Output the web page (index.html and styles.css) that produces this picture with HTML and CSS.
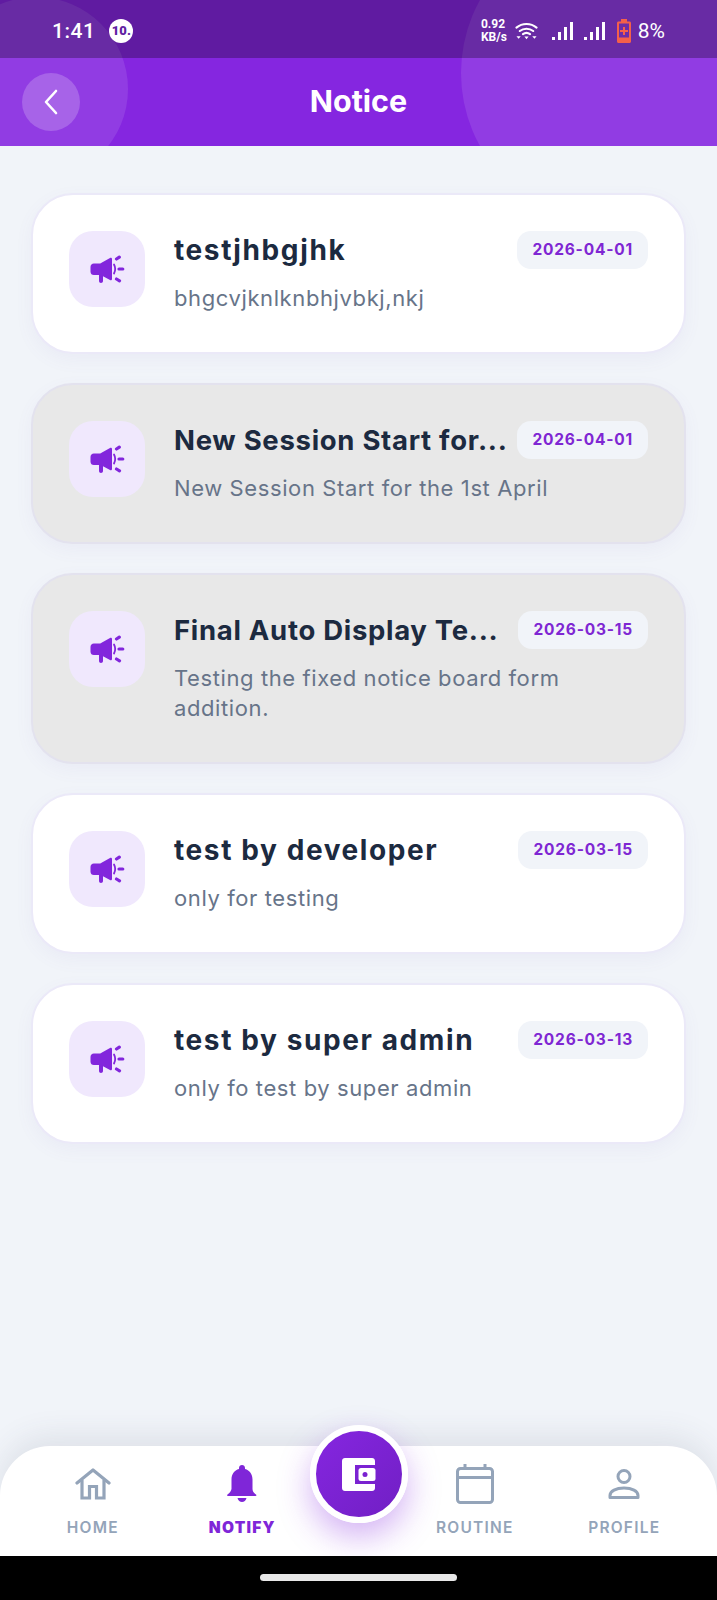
FILE: index.html

```html
<!DOCTYPE html>
<html lang="en">
<head>
  <meta charset="UTF-8">
  <title>Notice</title>
  <link rel="stylesheet" href="styles.css">
</head>
<body>
  <svg class="defs" width="0" height="0">
    <symbol id="megaphone" viewBox="0 0 36 28">
      <path d="M1.500 12c0-2.200 1.400-3.600 3.400-3.600h6.300L21 3c1-.5 2 .1 2 1.100v19.800c0 1-1 1.600-2 1.100l-7-3.800v4.800c0 1.200-.9 2-2 2s-2-.8-2-2v-6H4.900c-2 0-3.400-1.400-3.400-3.600z" fill="currentColor"/>
      <path d="M25 9.500c1.500 2.800 1.500 6.200 0 9" fill="none" stroke="currentColor" stroke-width="1.800" stroke-linecap="round"/>
      <path d="M27.500 4l2.800-1.800M30 14h3.800M27.500 24l3 1.800" fill="none" stroke="currentColor" stroke-width="3.200" stroke-linecap="round"/>
    </symbol>
  </svg>

  <header class="topbar">
    <span class="blob blob-left"></span>
    <span class="blob blob-right"></span>
    <div class="statusbar">
      <div class="status-left">
        <span class="clock">1:41</span>
        <span class="ten">10.</span>
      </div>
      <div class="status-right">
        <span class="speed">0.92<br>KB/s</span>
        <svg class="wifi" viewBox="0 0 24 20" width="23" height="20">
          <path d="M1.500 6.500C7.500 1.500 16.500 1.500 22.500 6.500M5 10c4-3.200 10-3.200 14 0M8.300 13.300c2.200-1.600 5.200-1.600 7.400 0" fill="none" stroke="#fff" stroke-width="2.200" stroke-linecap="round"/>
          <path d="M1.500 15.500h4.500l-2.200 2.500zM9.800 15.800h4.400L12 18.500zM18 15.500h4.500l-2.200 2.500z" fill="#fff"/>
        </svg>
        <svg class="bars" viewBox="0 0 21 20" width="21" height="20"><path d="M0 16h3v3H0zM6 11h3v8H6zM12 6h3v13h-3zM18 1h3v18h-3z" fill="#fff"/></svg>
        <svg class="bars" viewBox="0 0 21 20" width="21" height="20"><path d="M0 16h3v3H0zM6 11h3v8H6zM12 6h3v13h-3zM18 1h3v18h-3z" fill="#fff"/></svg>
        <svg class="battery" viewBox="0 0 14 24" width="14" height="24">
          <path d="M4 0h6v2.500h2.500c.8 0 1.500.7 1.500 1.500v18.500c0 .8-.7 1.500-1.500 1.500h-11C.7 24 0 23.300 0 22.500V4c0-.8.7-1.500 1.500-1.500H4z" fill="#f4604a"/>
          <path d="M2 4.500h10v14H2z" fill="#6a2da8"/>
          <path d="M6 8h2v3h3v2H8v3H6v-3H3v-2h3z" fill="#f4604a"/>
        </svg>
        <span class="percent">8%</span>
      </div>
    </div>
    <div class="titlebar">
      <button class="back">
        <svg viewBox="0 0 16 28" width="16" height="28"><path d="M13 3L3 14l10 11" fill="none" stroke="#fff" stroke-width="2.600" stroke-linecap="round" stroke-linejoin="round"/></svg>
      </button>
      <h1>Notice</h1>
    </div>
  </header>

  <main class="lista">
    <article class="card">
      <div class="card-icon"><svg width="36" height="28"><use href="#megaphone"/></svg></div>
      <div class="card-body">
        <div class="card-top">
          <h2>testjhbgjhk</h2>
          <span class="date">2026-04-01</span>
        </div>
        <p>bhgcvjknlknbhjvbkj,nkj</p>
      </div>
    </article>
    <article class="card read">
      <div class="card-icon"><svg width="36" height="28"><use href="#megaphone"/></svg></div>
      <div class="card-body">
        <div class="card-top">
          <h2 class="long">New Session Start for...</h2>
          <span class="date">2026-04-01</span>
        </div>
        <p>New Session Start for the 1st April</p>
      </div>
    </article>
    <article class="card read">
      <div class="card-icon"><svg width="36" height="28"><use href="#megaphone"/></svg></div>
      <div class="card-body">
        <div class="card-top">
          <h2 class="long">Final Auto Display Te...</h2>
          <span class="date">2026-03-15</span>
        </div>
        <p>Testing the fixed notice board form addition.</p>
      </div>
    </article>
    <article class="card">
      <div class="card-icon"><svg width="36" height="28"><use href="#megaphone"/></svg></div>
      <div class="card-body">
        <div class="card-top">
          <h2>test by developer</h2>
          <span class="date">2026-03-15</span>
        </div>
        <p>only for testing</p>
      </div>
    </article>
    <article class="card">
      <div class="card-icon"><svg width="36" height="28"><use href="#megaphone"/></svg></div>
      <div class="card-body">
        <div class="card-top">
          <h2>test by super admin</h2>
          <span class="date">2026-03-13</span>
        </div>
        <p>only fo test by super admin</p>
      </div>
    </article>
  </main>

  <nav class="tabs">
    <a class="tab">
      <div class="tab-icon">
        <svg viewBox="0 0 36 32" width="36" height="32">
          <path d="M2 15L18 2l16 13" fill="none" stroke="currentColor" stroke-width="3.200" stroke-linecap="round" stroke-linejoin="round"/>
          <path d="M7 12v18h7.500V18.500h7V30H29V12" fill="none" stroke="currentColor" stroke-width="3.200"/>
        </svg>
      </div>
      <span>HOME</span>
    </a>
    <a class="tab active">
      <div class="tab-icon">
        <svg viewBox="0 0 30 38" width="30" height="38">
          <path d="M15 0c1.700 0 3 1.300 3 3v1c4.700 1.300 7.500 5.300 7.500 10.500V24c0 2 1.200 4 3.500 5.500.8.600.500 1.500-.5 1.500H1c-1 0-1.300-.9-.5-1.500C2.800 28 4 26 4.500 24v-9.500C4.500 9.300 7.300 5.300 12 4V3c0-1.700 1.300-3 3-3z" fill="currentColor"/>
          <path d="M10.500 33h9c-.6 2.400-2.400 4-4.500 4s-3.900-1.600-4.500-4z" fill="currentColor"/>
        </svg>
      </div>
      <span>NOTIFY</span>
    </a>
    <div class="tab-gap">
      <button class="fab">
        <svg viewBox="0 0 35 33" width="35" height="33">
          <path d="M3 0h27c1.700 0 3 1.300 3 3v4H13v19h20v4c0 1.700-1.300 3-3 3H3c-1.700 0-3-1.300-3-3V3c0-1.700 1.300-3 3-3z" fill="#fff"/>
          <rect x="16.500" y="10" width="17" height="13" rx="2.500" fill="#fff"/>
          <circle cx="23" cy="16.500" r="2.500" fill="#7a22d0"/>
        </svg>
      </button>
    </div>
    <a class="tab">
      <div class="tab-icon">
        <svg viewBox="0 0 38 40" width="38" height="40">
          <rect x="1.500" y="4.500" width="35" height="34" rx="3" fill="none" stroke="currentColor" stroke-width="3"/>
          <path d="M1.500 13.500h35M9 0v6M29 0v6" fill="none" stroke="currentColor" stroke-width="3"/>
        </svg>
      </div>
      <span>ROUTINE</span>
    </a>
    <a class="tab">
      <div class="tab-icon">
        <svg viewBox="0 0 32 30" width="32" height="30">
          <circle cx="16" cy="7.500" r="6" fill="none" stroke="currentColor" stroke-width="3"/>
          <path d="M2 28.500v-2c0-4.500 6-7.500 14-7.500s14 3 14 7.500v2z" fill="none" stroke="currentColor" stroke-width="3" stroke-linejoin="round"/>
        </svg>
      </div>
      <span>PROFILE</span>
    </a>
  </nav>

  <div class="sysbar"><span class="pill"></span></div>
</body>
</html>
```

FILE: styles.css

```css
* {
  box-sizing: border-box;
}
body {
  font-family: "Inter", "Noto Sans", sans-serif;
  background-color: #f1f4f9;
  margin: 0;
  width: 717px;
  height: 1600px;
  display: flex;
  flex-direction: column;
  overflow: hidden;
}
.defs {
  position: absolute;
}

/* header */
.topbar {
  position: relative;
  height: 146px;
  background-color: #8526e0;
  overflow: hidden;
  flex-shrink: 0;
}
.blob {
  position: absolute;
  border-radius: 50%;
  background: rgba(255, 255, 255, 0.1);
}
.blob-left {
  left: -56px;
  top: -3px;
  width: 184px;
  height: 184px;
}
.blob-right {
  left: 461px;
  top: -77px;
  width: 300px;
  height: 300px;
}
.statusbar {
  position: relative;
  height: 58px;
  background: rgba(0, 0, 0, 0.28);
  color: #fff;
  font-family: "Roboto", sans-serif;
  display: flex;
  justify-content: space-between;
  align-items: center;
  padding: 4px 52px 0;
}
.status-left,
.status-right {
  display: flex;
  align-items: center;
}
.clock {
  font-size: 21px;
  font-weight: 500;
  letter-spacing: 0.5px;
}
.ten {
  width: 24px;
  height: 24px;
  margin-left: 14px;
  border-radius: 50%;
  background: #fff;
  color: #5f1ea2;
  font-size: 13px;
  font-weight: 900;
  line-height: 24px;
  text-align: center;
}
.speed {
  font-size: 12px;
  font-weight: 700;
  line-height: 13px;
  margin-right: 8px;
}
.wifi {
  margin-right: 14px;
}
.bars {
  margin-right: 11px;
}
.battery {
  margin: 0 7px 0 1px;
}
.percent {
  font-size: 21px;
}
.titlebar {
  position: relative;
  height: 88px;
  padding-bottom: 4px;
  display: flex;
  align-items: center;
  justify-content: center;
}
.back {
  position: absolute;
  left: 22px;
  top: 15px;
  width: 58px;
  height: 58px;
  border: none;
  border-radius: 50%;
  background: rgba(255, 255, 255, 0.2);
  display: flex;
  align-items: center;
  justify-content: center;
  padding: 0;
}
h1 {
  margin: 0;
  color: #fff;
  font-size: 30.500px;
  font-weight: 700;
}

/* cards */
.lista {
  flex: 1;
  display: flex;
  flex-direction: column;
  gap: 29px;
  padding: 47px 31px 0;
}
.card {
  display: flex;
  gap: 29px;
  padding: 36px 36px 39px;
  background: #fff;
  border: 2px solid #ebe9f8;
  border-radius: 42px;
  box-shadow: 0 6px 18px rgba(120, 110, 190, 0.06);
}
.card.read {
  background: #e8e8e8;
  border-color: #e3e2ee;
}
.card-icon {
  width: 76px;
  height: 76px;
  flex-shrink: 0;
  border-radius: 24px;
  background: #f0e8fd;
  color: #8226dc;
  display: flex;
  align-items: center;
  justify-content: center;
}
.card-body {
  flex: 1;
  min-width: 0;
}
.card-top {
  display: flex;
  justify-content: space-between;
  align-items: flex-start;
  gap: 4px;
  height: 38px;
}
h2 {
  margin: 0;
  color: #1c2a40;
  font-size: 28px;
  font-weight: 700;
  line-height: 38px;
  letter-spacing: 1.600px;
  white-space: nowrap;
}
h2.long {
  font-size: 27.500px;
  letter-spacing: 0.7px;
}
.date {
  flex-shrink: 0;
  height: 38px;
  padding: 0 15px;
  border-radius: 14px;
  background: #f1f4f9;
  color: #7f26d3;
  font-size: 15.500px;
  font-weight: 700;
  line-height: 38px;
  letter-spacing: 0.8px;
}
.card p {
  margin: 14px 0 0;
  color: #677489;
  font-size: 22px;
  line-height: 30px;
  letter-spacing: 0.6px;
}

/* bottom nav */
.tabs {
  height: 110px;
  flex-shrink: 0;
  padding: 0 18px;
  background: #fff;
  border-radius: 50px 50px 0 0;
  box-shadow: 0 -10px 30px rgba(60, 70, 90, 0.1);
  display: grid;
  grid-template-columns: 1fr 1fr 83px 1fr 1fr;
}
.tab {
  display: flex;
  flex-direction: column;
  align-items: center;
  justify-content: flex-end;
  gap: 15px;
  padding-bottom: 19px;
  color: #94a4b9;
  font-size: 15.500px;
  font-weight: 600;
  letter-spacing: 1.200px;
  line-height: 18px;
}
.tab-icon {
  height: 40px;
  display: flex;
  align-items: center;
}
.tab.active {
  color: #7f26d8;
  font-weight: 900;
}
.tab-gap {
  position: relative;
}
.fab {
  position: absolute;
  left: -7px;
  top: -21px;
  width: 98px;
  height: 98px;
  padding: 0;
  border: 6px solid #fff;
  border-radius: 50%;
  background: linear-gradient(135deg, #8526e0, #711fc4);
  box-shadow: 0 14px 32px rgba(132, 38, 224, 0.35);
  display: flex;
  align-items: center;
  justify-content: center;
}

/* android nav strip */
.sysbar {
  height: 44px;
  flex-shrink: 0;
  background: #000;
  display: flex;
  justify-content: center;
  padding-top: 18px;
  position: relative;
}
.pill {
  width: 197px;
  height: 7px;
  border-radius: 4px;
  background: #e8e8e8;
}
```
